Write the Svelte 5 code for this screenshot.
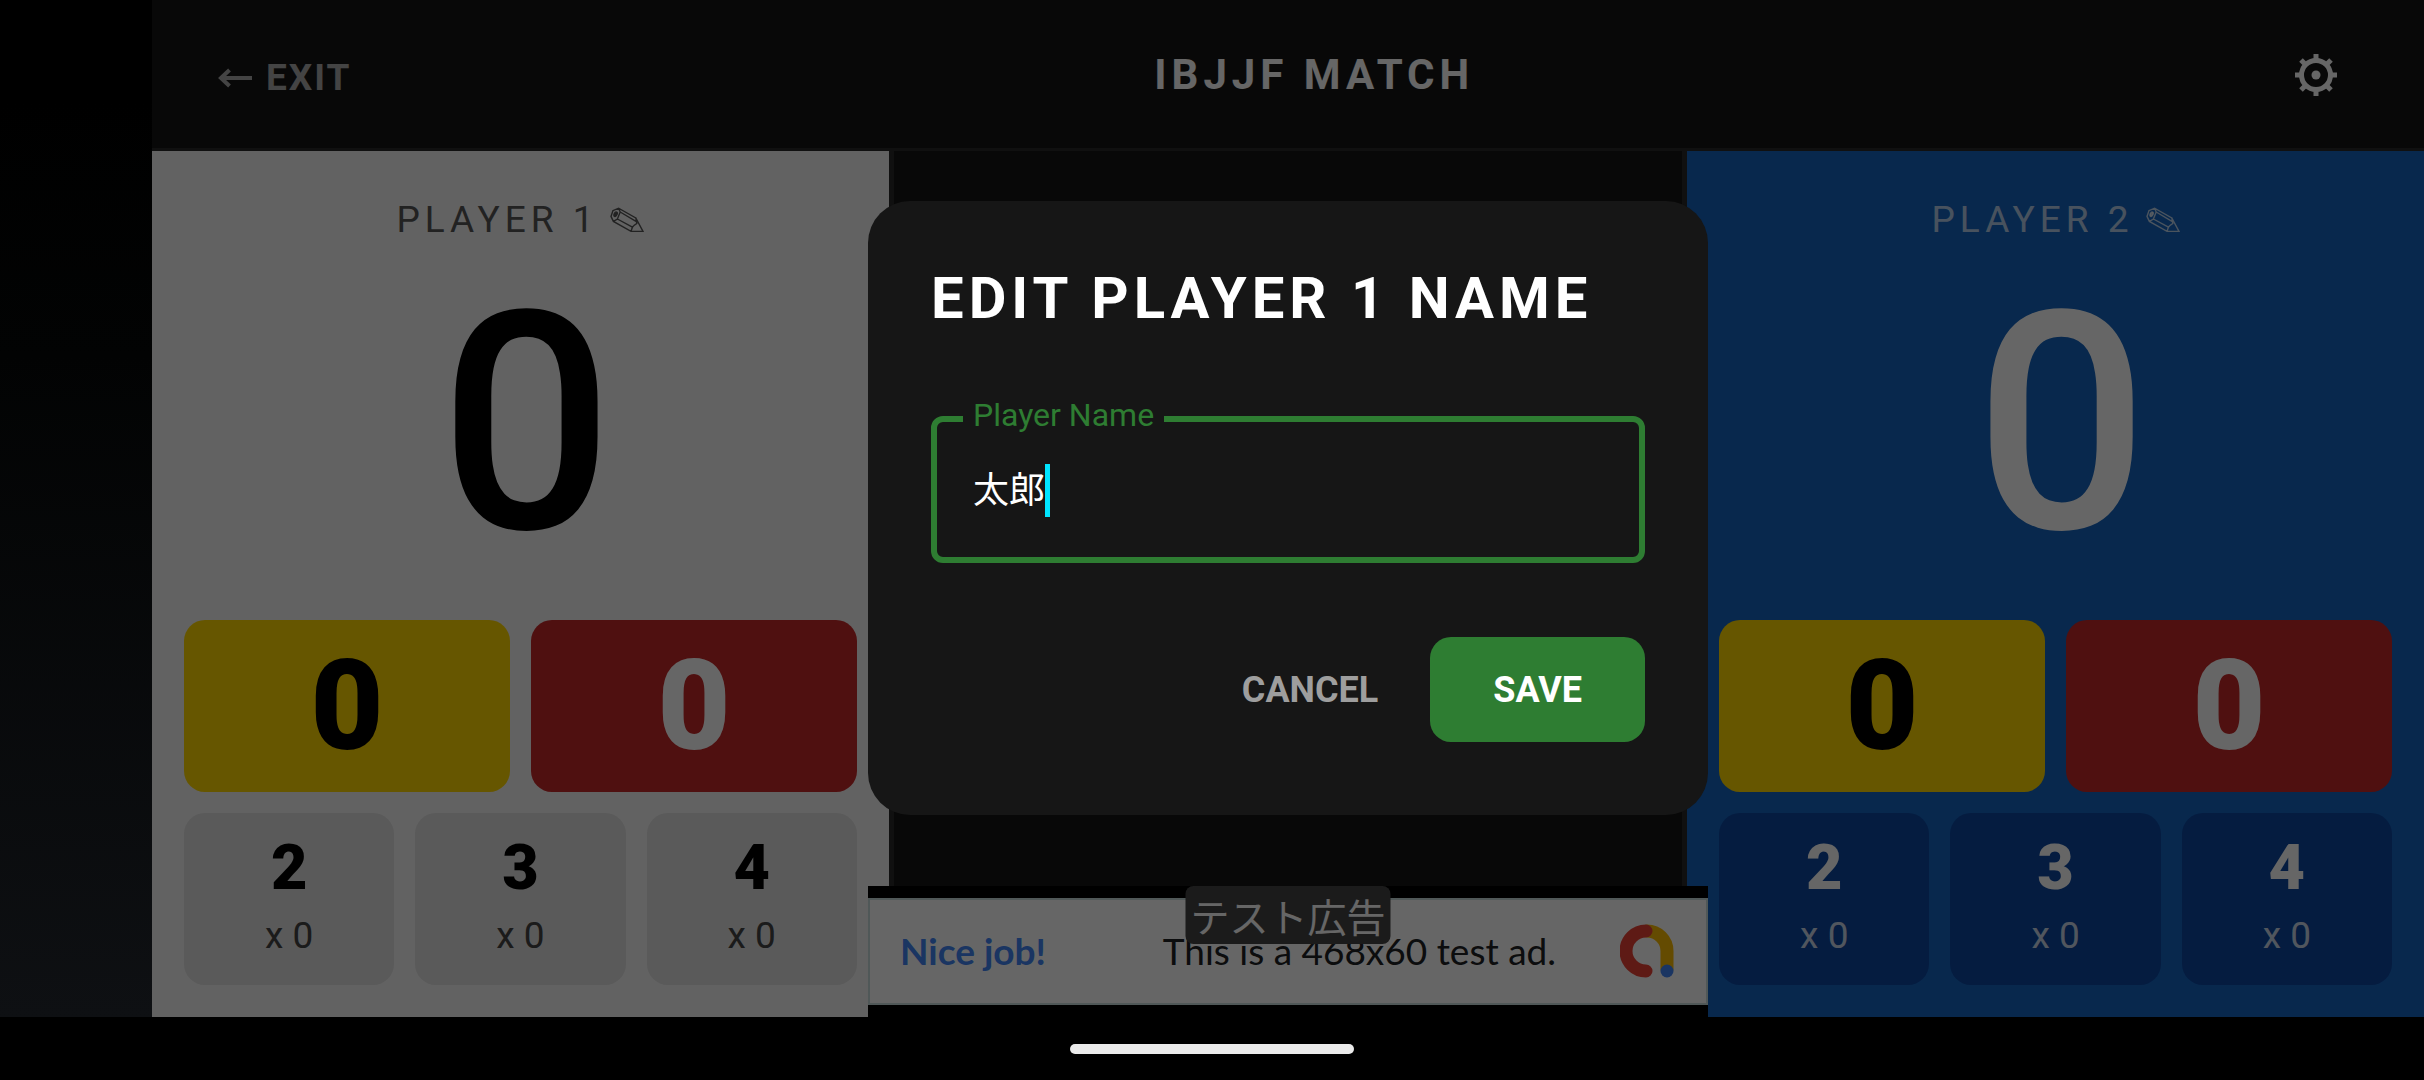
<script lang="ts">
  type Player = { id: number; theme: string; advantages: number; penalties: number; counts: { points: number; times: number }[] };

  const makePlayer = (id: number, theme: string): Player => ({
    id,
    theme,
    advantages: 0,
    penalties: 0,
    counts: [2, 3, 4].map((points) => ({ points, times: 0 }))
  });

  const players: Player[] = [makePlayer(1, 'light'), makePlayer(2, 'blue')];
  let name = $state('太郎');
  const score = (p: Player) => p.counts.reduce((sum, c) => sum + c.points * c.times, 0);
</script>

{#snippet panel(p: Player)}
  <section class="panel {p.theme}">
    <button class="name">
      <span>PLAYER {p.id}</span>
      <svg class="pencil" viewBox="0 0 34 26" aria-hidden="true">
        <path d="M3 3.6 8.6 1.2 25.8 11 33 24.4H21L3.4 14.4 1 9.4zM8.6 1.2 10.2 5 7.4 12 3.4 14.4M10.2 5 26.4 14.6M7.4 12 22.4 20.2M25.8 11 26.8 16.4 24 18.4 22.4 20.2 21 24.4" />
        <ellipse class="lead" cx="5.6" cy="7.2" rx="1.4" ry="2.4" transform="rotate(25 5.6 7.2)" />
      </svg>
    </button>
    <div class="score">{score(p)}</div>
    <div class="cards">
      <button class="card yellow">{p.advantages}</button>
      <button class="card red">{p.penalties}</button>
    </div>
    <div class="cards">
      {#each p.counts as c}
        <button class="card point"><strong>{c.points}</strong><span>x {c.times}</span></button>
      {/each}
    </div>
  </section>
{/snippet}

<div class="screen">
  <div class="stage">
    <div class="cutout"></div>
    <div class="app">
      <header>
        <button class="exit">
          <svg viewBox="0 0 34 24" aria-hidden="true"><path d="M34 12H4M11.5 4 3 12l8.5 8" /></svg>
          <span>EXIT</span>
        </button>
        <h1>IBJJF MATCH</h1>
        <button class="gear" aria-label="Settings">
          <svg viewBox="-21 -21 42 42" aria-hidden="true">
            <circle r="14.5" />
            <path d="M0-16v-5M0 16v5M-16 0h-5M16 0h5M-11-11l-4-4M11-11l4-4M-11 11l-4 4M11 11l4 4" />
            <circle class="dot" r="4.5" />
          </svg>
        </button>
      </header>

      <main>
        {@render panel(players[0])}
        <div class="middle"></div>
        {@render panel(players[1])}
      </main>

      <aside class="ad">
        <div class="banner">
          <a href="#ad">Nice job!</a>
          <p>This is a 468x60 test ad.</p>
          <svg class="admob" viewBox="0 0 54 54" aria-hidden="true">
            <path class="y" d="M27 7A20 20 0 0 1 47 27V45" />
            <path class="r" d="M26 7A20 20 0 0 0 26 47" />
            <circle class="b" cx="47" cy="47" r="6.5" />
          </svg>
        </div>
        <span class="badge">テスト広告</span>
      </aside>

      <div class="scrim">
        <form class="dialog" role="dialog" aria-labelledby="dialog-title" onsubmit={(e) => e.preventDefault()}>
          <h2 id="dialog-title">EDIT PLAYER 1 NAME</h2>
          <fieldset>
            <legend><label for="player-name">Player Name</label></legend>
            <div class="entry">
              <input id="player-name" type="text" bind:value={name} />
              <span class="caret"></span>
            </div>
          </fieldset>
          <div class="actions">
            <button type="button" class="cancel">CANCEL</button>
            <button type="submit" class="save">SAVE</button>
          </div>
        </form>
      </div>
    </div>
  </div>
  <footer><div class="home"></div></footer>
</div>

<style>
  :global(body) {
    background: #000;
  }
  * {
    box-sizing: border-box;
  }
  .screen {
    min-height: 100vh;
    display: flex;
    flex-direction: column;
    background: #000;
    font-family: Roboto, 'Noto Sans CJK JP', sans-serif;
  }
  button,
  input {
    font: inherit;
    color: inherit;
    background: none;
    border: 0;
    padding: 0;
    margin: 0;
  }
  h1,
  h2,
  p {
    margin: 0;
  }
  svg {
    display: block;
    flex: none;
    fill: none;
    stroke: currentColor;
  }
  .stage {
    flex: 1;
    display: flex;
  }
  .cutout {
    width: 152px;
    background: linear-gradient(#000 10%, #020303 35%, #0e1013);
  }
  .app {
    position: relative;
    flex: 1;
    display: flex;
    flex-direction: column;
    background: #161616;
  }
  header {
    height: 151px;
    padding: 2px 63px 0 66px;
    border-bottom: 3px solid #2a2a2a;
    display: flex;
    align-items: center;
    justify-content: space-between;
    color: #fff;
  }
  h1 {
    font-size: 42px;
    line-height: 48px;
    font-weight: 700;
    letter-spacing: 5px;
  }
  .exit {
    display: flex;
    align-items: center;
    gap: 14px;
    padding: 6px 6px 0 0;
    color: #aaa;
    font-size: 37px;
    line-height: 44px;
    font-weight: 700;
    letter-spacing: 2px;
  }
  .exit svg {
    width: 34px;
    height: 24px;
    stroke-width: 4;
  }
  .gear {
    padding: 0 24px;
  }
  .gear svg {
    width: 42px;
    height: 42px;
    stroke-width: 5;
  }
  .dot {
    fill: currentColor;
    stroke: none;
  }
  main {
    flex: 1;
    display: grid;
    grid-template-columns: 12fr 13fr 12fr;
  }
  .middle {
    border: solid #2a2a2a;
    border-width: 0 5px;
  }
  .panel {
    display: flex;
    flex-direction: column;
    padding: 47px 32px 32px;
  }
  .light {
    background: #f5f5f5;
    color: #000;
    --name: #555;
    --point: #e0e0e0;
    --times: #444;
  }
  .blue {
    background: #1565c0;
    color: #fff;
    --name: rgba(255, 255, 255, 0.7);
    --point: #0d47a1;
    --times: rgba(255, 255, 255, 0.8);
  }
  .name {
    align-self: center;
    display: flex;
    align-items: center;
    gap: 12px;
    font-size: 37px;
    line-height: 44px;
    letter-spacing: 5px;
    color: var(--name);
  }
  .pencil {
    width: 34px;
    height: 26px;
    stroke-width: 1.4;
  }
  .lead {
    fill: currentColor;
  }
  .score {
    flex: 1;
    display: flex;
    align-items: center;
    justify-content: center;
    padding: 0 0 14px 12px;
    font-size: 305px;
    line-height: 320px;
    font-weight: 500;
  }
  .cards {
    display: flex;
    gap: 21px;
  }
  .cards + .cards {
    margin-top: 21px;
  }
  .card {
    flex: 1;
    height: 172px;
    border-radius: 21px;
    font-size: 126px;
    line-height: 148px;
    font-weight: 900;
  }
  .yellow {
    background: #ffd600;
    color: #000;
  }
  .red {
    background: #c62828;
    color: #fff;
  }
  .point {
    display: flex;
    flex-direction: column;
    align-items: center;
    justify-content: center;
    background: var(--point);
    font-size: 63px;
    line-height: 74px;
  }
  .point strong {
    font-weight: 900;
  }
  .point span {
    font-size: 37px;
    line-height: 62px;
    font-weight: 400;
    color: var(--times);
  }
  .ad {
    position: absolute;
    left: 50%;
    bottom: 0;
    width: 840px;
    margin-left: -420px;
    padding: 12px 0;
    background: #000;
  }
  .banner {
    height: 107px;
    padding: 0 32px 1px 30px;
    border: 2px solid #c8dcdc;
    background: #fff;
    display: flex;
    align-items: center;
    font-family: Lato, sans-serif;
    font-size: 37px;
    line-height: 44px;
  }
  .banner a {
    color: #4285f4;
    font-weight: 700;
    text-decoration: none;
  }
  .banner p {
    margin-left: auto;
    margin-right: 64px;
    color: #202124;
  }
  .admob {
    width: 54px;
    height: 54px;
    stroke-width: 13;
    stroke-linecap: round;
  }
  .y {
    stroke: #fbbc04;
  }
  .r {
    stroke: #ea4335;
  }
  .b {
    fill: #4285f4;
    stroke: none;
  }
  .badge {
    position: absolute;
    top: 0;
    left: 50%;
    transform: translateX(-50%);
    padding: 0 5px;
    border-radius: 8px;
    background: #444;
    color: #fff;
    font-family: 'Noto Sans CJK JP', sans-serif;
    font-size: 39px;
    line-height: 58px;
    white-space: nowrap;
  }
  .scrim {
    position: absolute;
    inset: 0;
    display: flex;
    align-items: center;
    justify-content: center;
    padding-bottom: 1px;
    background: rgba(0, 0, 0, 0.6);
  }
  .dialog {
    width: 840px;
    padding: 63px 63px 73px;
    border-radius: 42px;
    background: #161616;
    color: #fff;
  }
  h2 {
    font-size: 58px;
    line-height: 68px;
    font-weight: 700;
    letter-spacing: 5px;
    white-space: nowrap;
  }
  fieldset {
    margin: 64px 0 74px;
    padding: 0 37px 0 26px;
    min-width: 0;
    border: 6px solid #2e7d32;
    border-radius: 12px;
  }
  legend {
    padding: 0 10px 8px;
    font-size: 32px;
    line-height: 38px;
    color: #2e7d32;
  }
  .entry {
    display: flex;
    align-items: center;
    height: 115px;
    padding: 0 10px 18px;
  }
  input {
    field-sizing: content;
    max-width: 100%;
    outline: none;
    font-size: 36px;
    line-height: 52px;
  }
  .caret {
    width: 5px;
    height: 53px;
    background: #00e5ff;
  }
  .actions {
    display: flex;
    justify-content: flex-end;
    gap: 52px;
    font-size: 36px;
    line-height: 44px;
    font-weight: 700;
  }
  .cancel {
    color: #9e9e9e;
  }
  .save {
    height: 105px;
    padding: 0 63px;
    border-radius: 21px;
    background: #2e7d32;
  }
  footer {
    height: 63px;
    display: flex;
    align-items: center;
    justify-content: center;
    padding-top: 1px;
  }
  .home {
    width: 284px;
    height: 10px;
    border-radius: 5px;
    background: #ebebeb;
  }
</style>
